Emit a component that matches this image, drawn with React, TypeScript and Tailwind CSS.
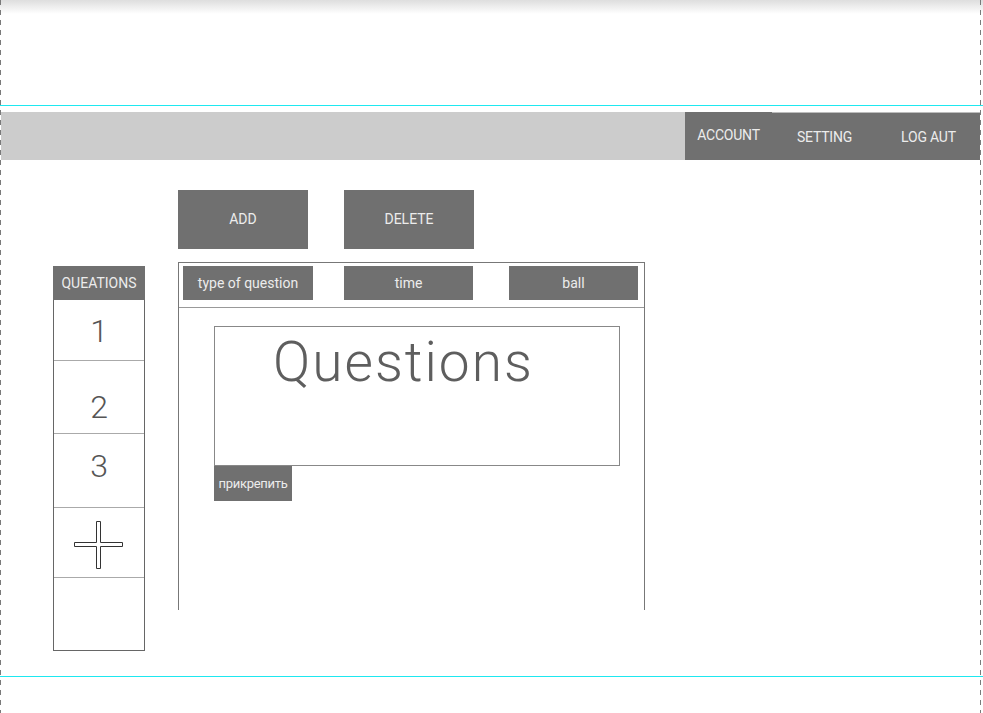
const NAV = [
  { label: "ACCOUNT", w: "w-[87px]", top: true },
  { label: "SETTING", w: "w-[105px]", top: false },
  { label: "LOG AUT", w: "w-[103px]", top: false },
];

const ROWS = [
  { h: "h-[61px]", label: "1", pad: "pt-[1px]" },
  { h: "h-[73px]", label: "2", pad: "pt-[20px]" },
  { h: "h-[74px]", label: "3", pad: "pb-[10px]" },
];

function PlusIcon() {
  return (
    <svg width="52" height="50" viewBox="0 0 52 50" fill="none">
      <path
        d="M23.5 1.5 H27.5 V22.5 H49.5 V26.5 H27.5 V48.5 H23.5 V26.5 H1.5 V22.5 H23.5 Z"
        stroke="#333"
        strokeWidth="1"
        fill="#fff"
      />
    </svg>
  );
}

export default function App() {
  return (
    <div
      className="relative w-[983px] h-[713px] bg-white overflow-hidden"
      style={{ fontFamily: "Roboto, 'Liberation Sans', sans-serif" }}
    >
      <div className="w-[980px] h-[713px] pl-px">
        {/* top shadow */}
        <div className="h-[14px] -ml-px w-[983px] bg-gradient-to-b from-[#dedede] to-white" />
        <div className="h-[91px]" />
        {/* cyan guide */}
        <div className="h-px bg-[#1ee8f0] -ml-px w-[983px]" />
        <div className="h-[6px]" />

        {/* nav */}
        <div className="flex h-[48px] bg-[#cccccc]">
          <div className="flex-1" />
          {NAV.map((n) => (
            <div
              key={n.label}
              className={`${n.w} flex items-center justify-center bg-[#707070] text-[14px] text-[#ececec] tracking-[-0.2px] ${
                n.top ? "pb-[2px]" : "border-t border-[#bcbcbc] pt-[1px]"
              }`}
            >
              {n.label}
            </div>
          ))}
        </div>

        {/* body */}
        <div className="flex pl-[52px]">
          {/* questions list */}
          <div className="w-[92px] mt-[106px] flex flex-col">
            <div className="h-[34px] bg-[#707070] text-[#ececec] text-[14px] flex items-center justify-center">
              QUEATIONS
            </div>
            <div className="border-x border-b border-[#666]">
              {ROWS.map((r) => (
                <div
                  key={r.label}
                  className={`${r.h} ${r.pad} border-b border-[#aaa] flex items-center justify-center text-[32px] font-light text-[#555]`}
                >
                  {r.label}
                </div>
              ))}
              <div className="h-[70px] border-b border-[#aaa] flex items-center justify-center pt-[4px]">
                <PlusIcon />
              </div>
              <div className="h-[72px]" />
            </div>
          </div>

          {/* main column */}
          <div className="ml-[33px] flex flex-col">
            <div className="mt-[30px] flex gap-[36px]">
              {["ADD", "DELETE"].map((b) => (
                <div
                  key={b}
                  className="w-[130px] h-[59px] bg-[#707070] text-[#ececec] text-[14px] flex items-center justify-center"
                >
                  {b}
                </div>
              ))}
            </div>

            <div className="mt-[13px] w-[467px] h-[348px] border-t border-x border-[#777]">
              <div className="h-[45px] border-b border-[#999] flex pt-[3px] pl-[4px]">
                <div className="w-[130px] h-[34px] bg-[#707070] text-[#ececec] text-[14px] flex items-center justify-center">
                  type of question
                </div>
                <div className="ml-[31px] w-[129px] h-[34px] bg-[#707070] text-[#ececec] text-[14px] flex items-center justify-center">
                  time
                </div>
                <div className="ml-[36px] w-[129px] h-[34px] bg-[#707070] text-[#ececec] text-[14px] flex items-center justify-center">
                  ball
                </div>
              </div>

              <div className="pl-[35px] pt-[18px]">
                <div className="w-[406px] h-[140px] border border-[#888] pl-[58px]">
                  <div className="text-[55px] font-light leading-none text-[#5e5e5e] tracking-[2px] pt-[8px]">
                    Questions
                  </div>
                </div>
                <div className="w-[78px] h-[35px] bg-[#707070] text-[#ececec] text-[13px] flex items-center justify-center tracking-[-0.3px]">
                  прикрепить
                </div>
              </div>
            </div>
          </div>
        </div>
      </div>

      {/* guide lines drawn over the page */}
      <div className="absolute left-0 top-0 w-px h-[713px] bg-[repeating-linear-gradient(to_bottom,#7a7a7a_0_5px,transparent_5px_10px)]" />
      <div className="absolute left-[980px] top-0 w-px h-[713px] bg-[repeating-linear-gradient(to_bottom,#7a7a7a_0_5px,transparent_5px_10px)]" />
      <div className="absolute left-0 right-0 top-[676px] h-px bg-[#1ee8f0]" />
    </div>
  );
}
